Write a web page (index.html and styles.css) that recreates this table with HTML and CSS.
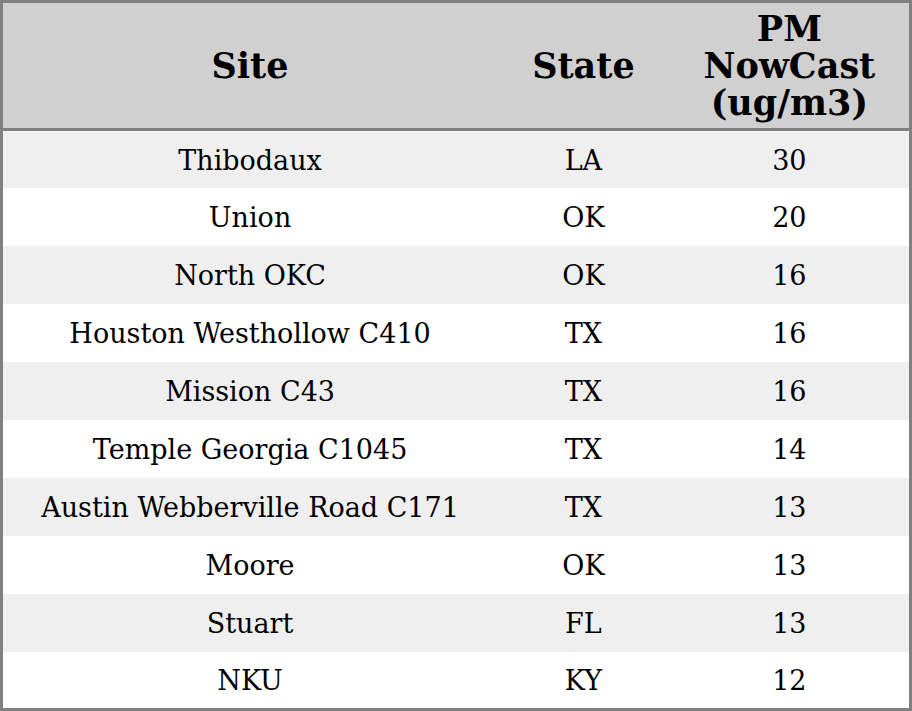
FILE: index.html
```html
<!DOCTYPE html>
<html>
<head>
<meta charset="utf-8">
<link rel="stylesheet" href="styles.css">
</head>
<body>
<table class="aq">
  <colgroup>
    <col class="c-site">
    <col class="c-state">
    <col class="c-pm">
  </colgroup>
  <thead>
    <tr class="head">
      <th>Site</th>
      <th>State</th>
      <th>PM<br>NowCast<br>(ug/m3)</th>
    </tr>
  </thead>
  <tbody>
    <tr><td>Thibodaux</td><td>LA</td><td>30</td></tr>
    <tr><td>Union</td><td>OK</td><td>20</td></tr>
    <tr><td>North OKC</td><td>OK</td><td>16</td></tr>
    <tr><td>Houston Westhollow C410</td><td>TX</td><td>16</td></tr>
    <tr><td>Mission C43</td><td>TX</td><td>16</td></tr>
    <tr><td>Temple Georgia C1045</td><td>TX</td><td>14</td></tr>
    <tr><td>Austin Webberville Road C171</td><td>TX</td><td>13</td></tr>
    <tr><td>Moore</td><td>OK</td><td>13</td></tr>
    <tr><td>Stuart</td><td>FL</td><td>13</td></tr>
    <tr><td>NKU</td><td>KY</td><td>12</td></tr>
  </tbody>
</table>
</body>
</html>
```
FILE: styles.css
```css
html, body {
  margin: 0;
  padding: 0;
  background: #ffffff;
}
.aq {
  width: 912px;
  height: 711px;
  border-collapse: collapse;
  border: 3px solid #808080;
  font-family: "DejaVu Serif", serif;
  color: #000;
  table-layout: fixed;
}
.c-site { width: 494px; }
.c-state { width: 172px; }
.c-pm { width: 240px; }
.head th {
  background: #d0d0d0;
  font-weight: bold;
  font-size: 35px;
  line-height: 37px;
  height: 125px;
  padding: 0;
  text-align: center;
  vertical-align: middle;
  border-bottom: 3px solid #808080;
}
tbody td {
  font-size: 27px;
  height: 57.7px;
  padding: 2px 0 0 0;
  box-sizing: border-box;
  text-align: center;
  vertical-align: middle;
}
tbody tr:nth-child(odd) td {
  background: #efefef;
}
```
